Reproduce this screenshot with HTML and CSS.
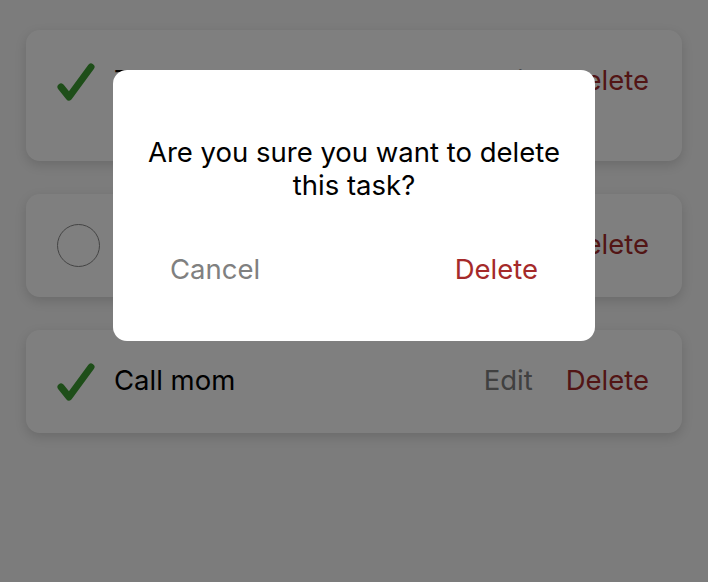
FILE: index.html
```html
<!DOCTYPE html>
<html lang="en">
<head>
<meta charset="utf-8">
<title>Tasks</title>
<link rel="stylesheet" href="styles.css">
</head>
<body>
<main class="list">
  <div class="card">
    <span class="status"><svg class="check" viewBox="0 0 43 43"><polyline points="4,27 12,37 34,7"/></svg></span>
    <p class="title">Take out the trash and do the shopping</p>
    <div class="actions"><span class="edit">Edit</span><span class="delete">Delete</span></div>
  </div>
  <div class="card">
    <span class="status"><span class="circle"></span></span>
    <p class="title">Buy groceries</p>
    <div class="actions"><span class="edit">Edit</span><span class="delete">Delete</span></div>
  </div>
  <div class="card">
    <span class="status"><svg class="check" viewBox="0 0 43 43"><polyline points="4,27 12,37 34,7"/></svg></span>
    <p class="title">Call mom</p>
    <div class="actions"><span class="edit">Edit</span><span class="delete">Delete</span></div>
  </div>
</main>
<div class="overlay">
  <div class="modal">
    <p class="question">Are you sure you want to delete this task?</p>
    <div class="buttons">
      <span class="cancel">Cancel</span>
      <span class="confirm">Delete</span>
    </div>
  </div>
</div>
</body>
</html>
```
FILE: styles.css
```css
* { box-sizing: border-box; }
html, body { margin: 0; height: 100%; }
body {
  background: #f8f8f8;
  font-family: Inter, "Liberation Sans", sans-serif;
  font-size: 27.5px;
  color: #000;
}
.list {
  padding: 30px 26px;
  display: flex;
  flex-direction: column;
  gap: 33px;
}
.card {
  background: #fff;
  border-radius: 14px;
  box-shadow: 0 4px 12px rgba(0,0,0,0.14);
  padding: 30px 33px 30px 31px;
  display: flex;
  align-items: flex-start;
  gap: 14px;
}
.status {
  width: 43px;
  height: 43px;
  flex: none;
  display: flex;
  align-items: center;
  justify-content: center;
}
.check { width: 43px; height: 43px; }
.check polyline {
  fill: none;
  stroke: #3c9c32;
  stroke-width: 7;
  stroke-linecap: round;
  stroke-linejoin: round;
}
.circle {
  width: 43px;
  height: 43px;
  border-radius: 50%;
  border: 1.5px solid #888;
}
.title {
  flex: 1;
  margin: 0;
  padding-top: 3px;
  line-height: 34px;
}
.actions {
  display: flex;
  gap: 33px;
  height: 43px;
  align-items: center;
  margin-top: -2px;
}
.edit { color: #808080; }
.delete { color: #a52a2a; }
.overlay {
  position: fixed;
  inset: 0;
  background: rgba(0,0,0,0.5);
  display: flex;
  justify-content: center;
  align-items: flex-start;
  padding-top: 70px;
}
.modal {
  width: 482px;
  height: 271px;
  background: #fff;
  border-radius: 14px;
  padding: 66px 30px 0;
  display: flex;
  flex-direction: column;
}
.question {
  margin: 0;
  text-align: center;
  line-height: 33px;
}
.buttons {
  margin-top: 45px;
  padding: 0 27px;
  height: 44px;
  display: flex;
  justify-content: space-between;
  align-items: center;
}
.cancel { color: #808080; }
.confirm { color: #a52a2a; }
```
